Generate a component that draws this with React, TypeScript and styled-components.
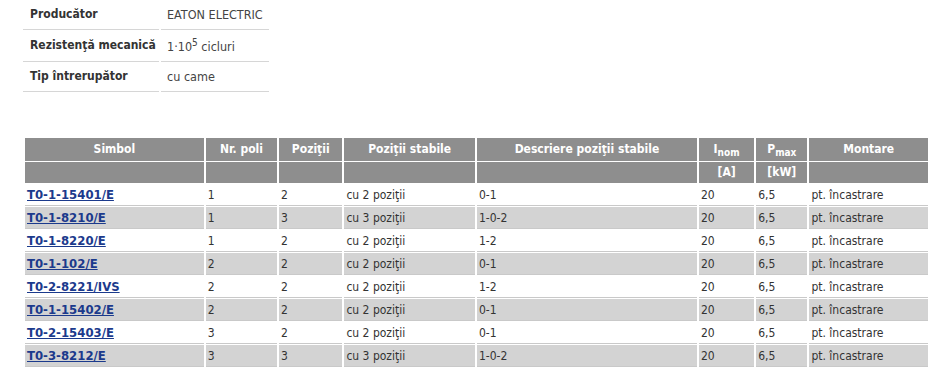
import React from 'react';
import styled, { createGlobalStyle } from 'styled-components';

const GlobalStyle = createGlobalStyle`
  html, body {
    margin: 0;
    padding: 0;
    background: #ffffff;
  }
  body {
    font-family: 'DejaVu Sans Condensed', 'DejaVu Sans', Verdana, sans-serif;
    font-size: 12px;
    color: #333333;
  }
`;

const Page = styled('div')`
  padding: 0 0 0 23px;
  width: 906px;
`;

const SpecTable = styled('table')`
  border-collapse: separate;
  border-spacing: 2px 0;
  margin-left: -2px;
  margin-bottom: 45px;

  th,
  td {
    border-bottom: 1px solid #d6d6d6;
    text-align: left;
    vertical-align: middle;
    line-height: 15px;
    white-space: nowrap;
  }

  th {
    font-weight: bold;
    color: #333333;
    width: 127px;
    padding: 7px 2px 7px 7px;
  }

  td {
    width: 102px;
    color: #444444;
    font-size: 12.5px;
    padding: 7px 0 7px 6px;
  }

  sup {
    font-size: 10px;
    line-height: 0;
  }
`;

const SpecValueTall = styled('td')`
  && {
    padding-top: 9px;
    padding-bottom: 7px;
  }
`;

const ProductTable = styled('table')`
  border-collapse: separate;
  border-spacing: 2px 1px;
  width: 907px;
  table-layout: fixed;

  th {
    background: #8e8e8e;
    color: #ffffff;
    font-weight: bold;
    text-align: center;
    padding: 3px 4px;
    line-height: 15px;
    white-space: nowrap;
  }

  thead tr:first-child th {
    height: 17px;
  }

  thead tr:last-child th {
    height: 14px;
  }

  td {
    padding: 3px 2px 2px 2px;
    line-height: 15px;
    border-bottom: 1px solid #c9c9c9;
    color: #333333;
    white-space: nowrap;
  }

  sub {
    font-size: 10px;
    line-height: 0;
  }
`;

const Row = styled('tr')<{ $shaded: boolean }>`
  td {
    background: ${(p) => (p.$shaded ? '#d3d3d3' : '#ffffff')};
  }
`;

const SymbolLink = styled('a')`
  color: #1b3a8c;
  font-size: 13px;
  font-weight: bold;
  text-decoration: underline;
`;

interface ProductType {
  simbol: string;
  poli: number;
  pozitii: number;
  stabile: string;
  descriere: string;
}

const products: ProductType[] = [
  { simbol: 'T0-1-15401/E', poli: 1, pozitii: 2, stabile: 'cu 2 poziţii', descriere: '0-1' },
  { simbol: 'T0-1-8210/E', poli: 1, pozitii: 3, stabile: 'cu 3 poziţii', descriere: '1-0-2' },
  { simbol: 'T0-1-8220/E', poli: 1, pozitii: 2, stabile: 'cu 2 poziţii', descriere: '1-2' },
  { simbol: 'T0-1-102/E', poli: 2, pozitii: 2, stabile: 'cu 2 poziţii', descriere: '0-1' },
  { simbol: 'T0-2-8221/IVS', poli: 2, pozitii: 2, stabile: 'cu 2 poziţii', descriere: '1-2' },
  { simbol: 'T0-1-15402/E', poli: 2, pozitii: 2, stabile: 'cu 2 poziţii', descriere: '0-1' },
  { simbol: 'T0-2-15403/E', poli: 3, pozitii: 2, stabile: 'cu 2 poziţii', descriere: '0-1' },
  { simbol: 'T0-3-8212/E', poli: 3, pozitii: 3, stabile: 'cu 3 poziţii', descriere: '1-0-2' },
];

const columnWidths = [178, 71, 63, 130, 219, 55, 51, 118];

export default function App() {
  return (
    <Page>
      <GlobalStyle />
      <SpecTable>
        <tbody>
          <tr>
            <th>Producător</th>
            <td>EATON ELECTRIC</td>
          </tr>
          <tr>
            <th>Rezistenţă mecanică</th>
            <SpecValueTall>
              1·10<sup>5</sup> cicluri
            </SpecValueTall>
          </tr>
          <tr>
            <th>Tip întrerupător</th>
            <td>cu came</td>
          </tr>
        </tbody>
      </SpecTable>

      <ProductTable>
        <colgroup>
          {columnWidths.map((w, i) => (
            <col key={i} style={{ width: w }} />
          ))}
        </colgroup>
        <thead>
          <tr>
            <th>Simbol</th>
            <th>Nr. poli</th>
            <th>Poziţii</th>
            <th>Poziţii stabile</th>
            <th>Descriere poziţii stabile</th>
            <th>
              I<sub>nom</sub>
            </th>
            <th>
              P<sub>max</sub>
            </th>
            <th>Montare</th>
          </tr>
          <tr>
            <th />
            <th />
            <th />
            <th />
            <th />
            <th>[A]</th>
            <th>[kW]</th>
            <th />
          </tr>
        </thead>
        <tbody>
          {products.map((product, i) => (
            <Row key={product.simbol} $shaded={i % 2 === 1}>
              <td>
                <SymbolLink href="#">{product.simbol}</SymbolLink>
              </td>
              <td>{product.poli}</td>
              <td>{product.pozitii}</td>
              <td>{product.stabile}</td>
              <td>{product.descriere}</td>
              <td>20</td>
              <td>6,5</td>
              <td>pt. încastrare</td>
            </Row>
          ))}
        </tbody>
      </ProductTable>
    </Page>
  );
}
